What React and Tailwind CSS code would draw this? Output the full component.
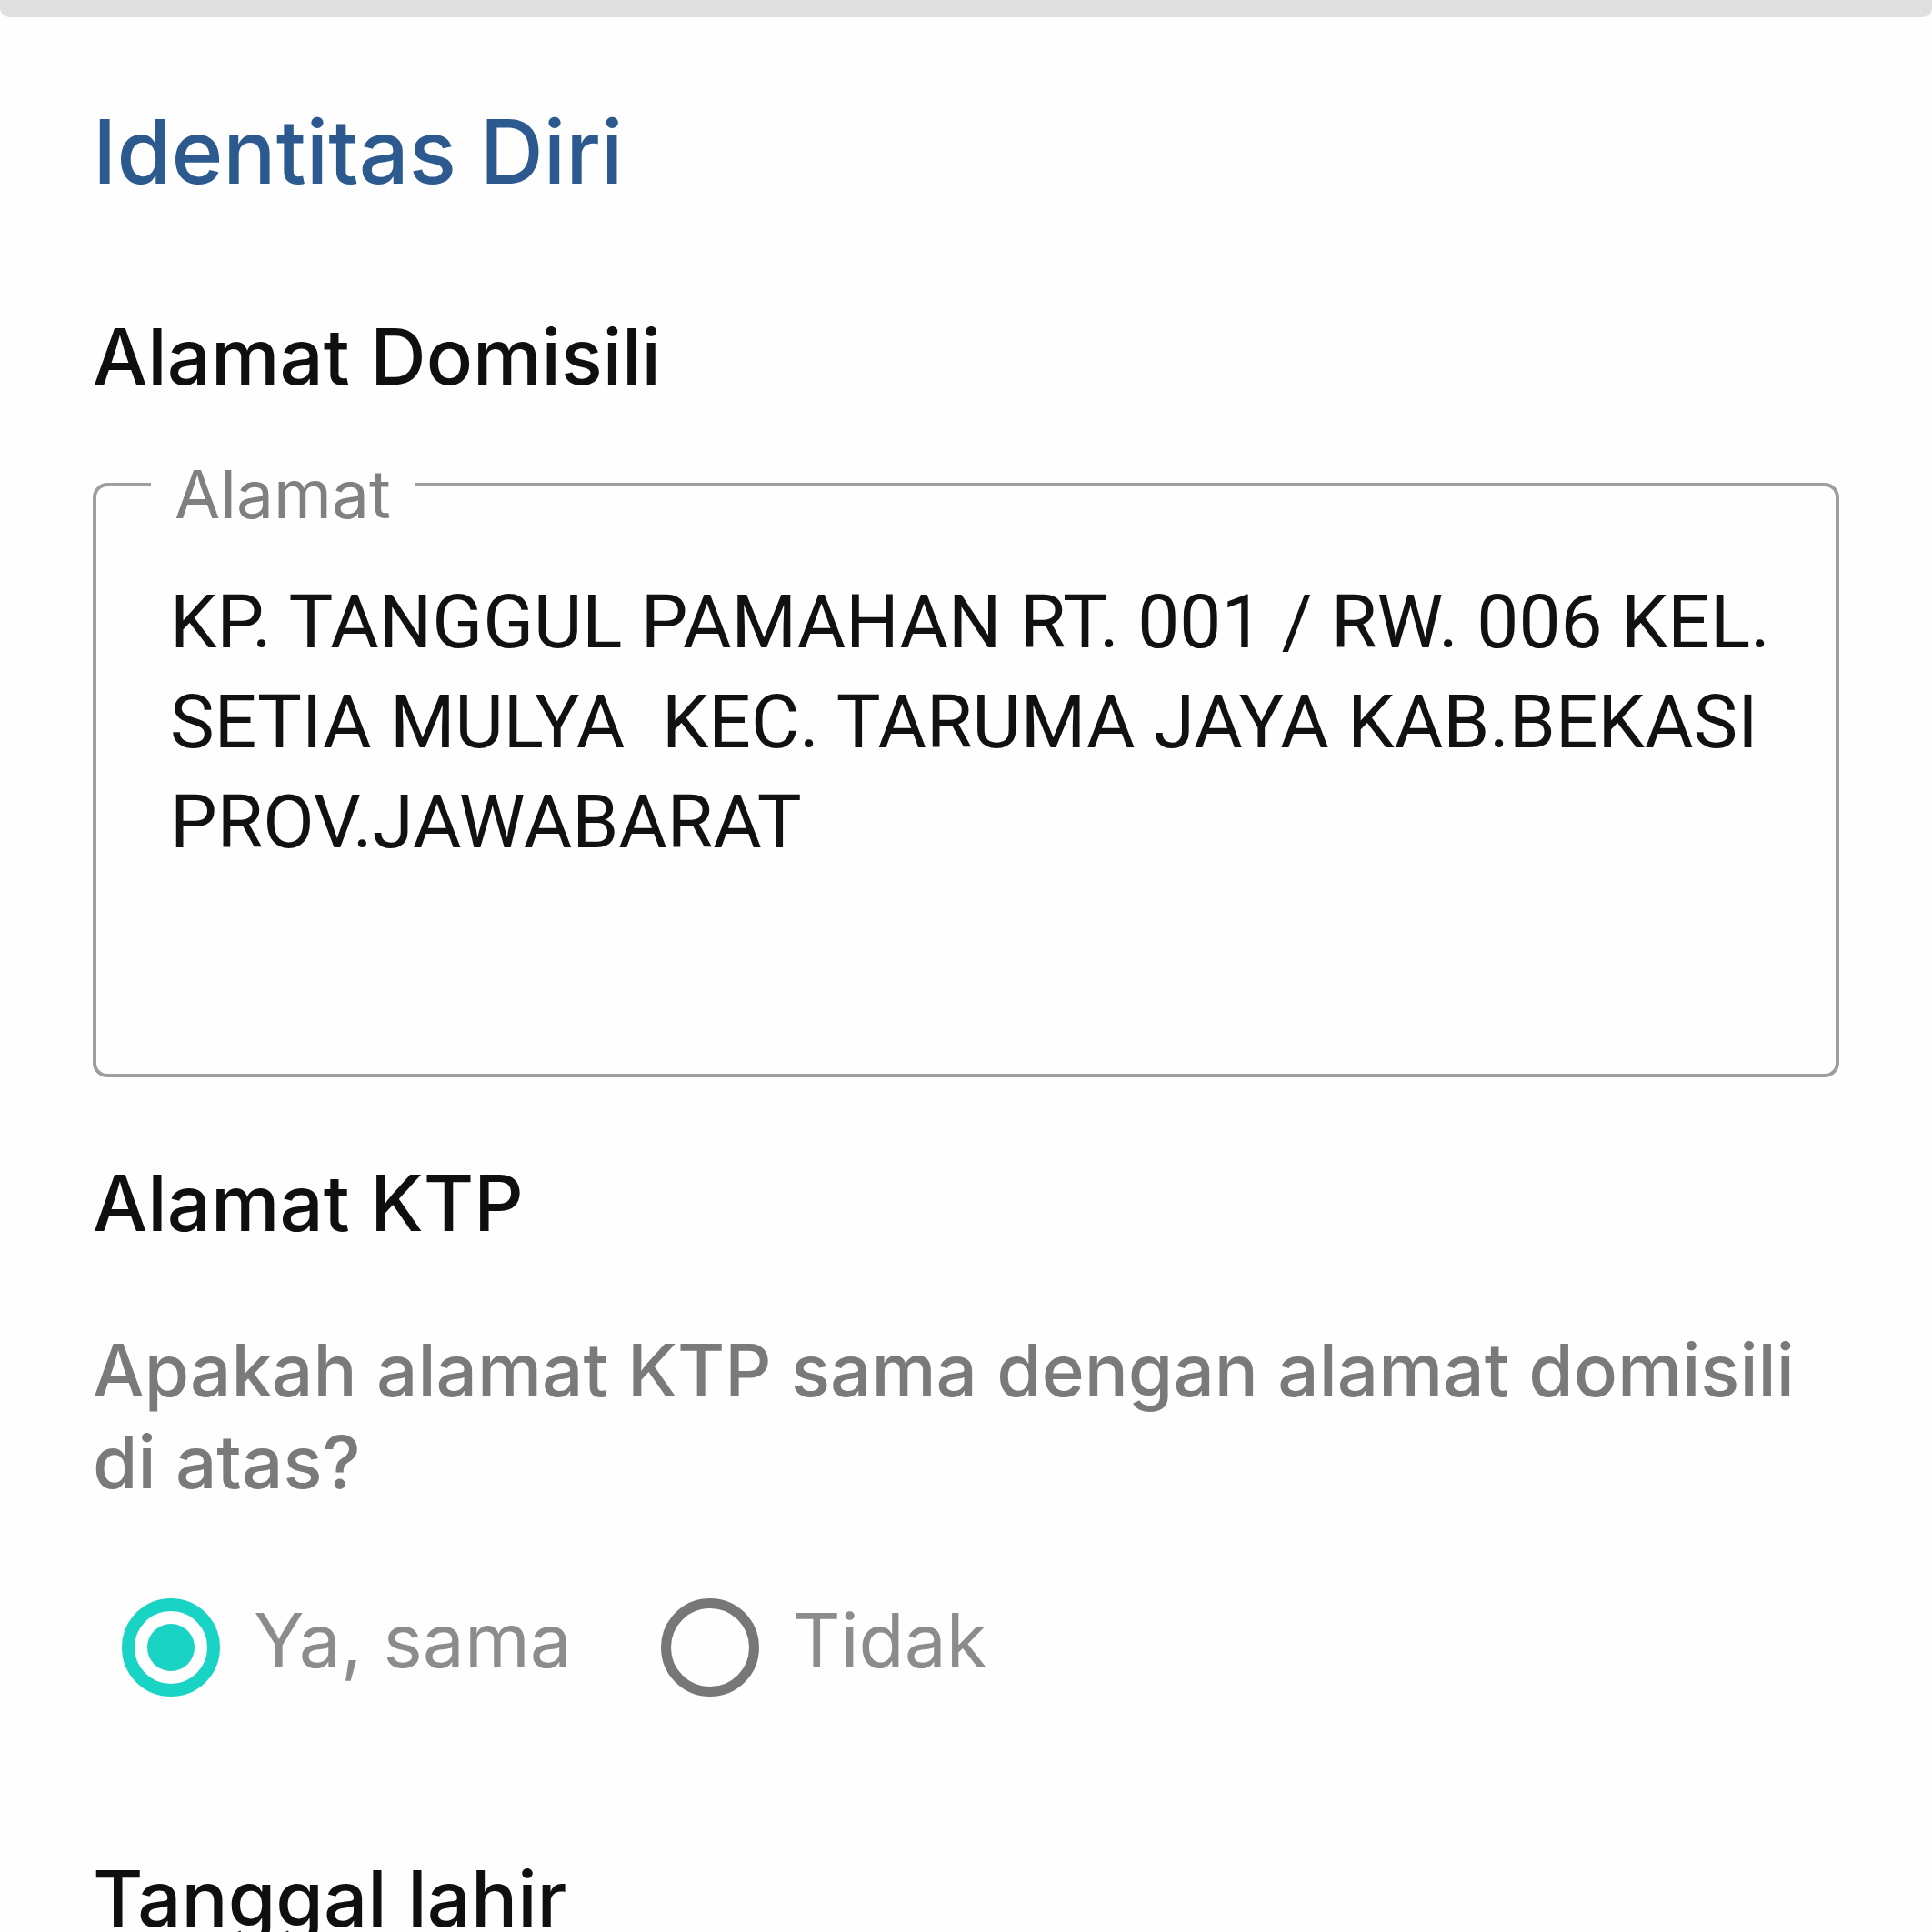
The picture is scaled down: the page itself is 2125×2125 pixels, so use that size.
import { useState } from 'react';

const alamatLines = [
  'KP. TANGGUL PAMAHAN RT. 001 / RW. 006 KEL.',
  'SETIA MULYA  KEC. TARUMA JAYA KAB.BEKASI',
  'PROV.JAWABARAT',
];

const Radio = ({ checked, label, onClick }) => {
  return (
    <button type="button" onClick={onClick} className="flex items-center gap-[37px] focus:outline-none">
      {checked ? (
        <span className="flex h-[108px] w-[108px] items-center justify-center rounded-full border-[14px] border-[#19d3c5]">
          <span className="h-[52px] w-[52px] rounded-full bg-[#19d3c5]" />
        </span>
      ) : (
        <span className="h-[108px] w-[108px] rounded-full border-[11px] border-[#777777]" />
      )}
      <span className="pb-[14px] text-[82px] font-normal leading-[100px] text-[#8c8c8c]">{label}</span>
    </button>
  );
};

const App = () => {
  const [sama, setSama] = useState(true);

  return (
    <div className="min-h-screen bg-[#fefefe] font-['Inter',sans-serif]">
      {/* sheet handle bar */}
      <div className="h-[19px] w-full rounded-b-[10px] bg-[#e0e0e0]" />

      <div className="px-[102px]">
        <h1 className="mt-[88px] text-[97px] font-medium leading-[120px] text-[#2c5a8e]">Identitas Diri</h1>

        <h2 className="mt-[116px] text-[85px] font-medium leading-[100px] text-[#0f0f0f]">Alamat Domisili</h2>

        {/* outlined textarea */}
        <div className="relative mt-[88px] h-[654px] rounded-[16px] border-[4px] border-[#9e9e9e]">
          <span className="absolute -top-[41px] left-[60px] bg-[#fefefe] px-[26px] text-[73px] font-normal leading-[100px] text-[#808080]">
            Alamat
          </span>
          <div className="pl-[81px] pt-[94px] font-['Roboto',sans-serif] text-[82px] leading-[110px] text-[#111111]">
            {alamatLines.map((line) => (
              <div key={line} className="whitespace-pre">{line}</div>
            ))}
          </div>
        </div>

        <h2 className="mt-[89px] text-[85px] font-medium leading-[100px] text-[#0f0f0f]">Alamat KTP</h2>

        <p className="mt-[82px] text-[80px] font-medium leading-[101px] text-[#7a7a7a]">
          Apakah alamat KTP sama dengan alamat domisili
          <br />
          di atas?
        </p>

        <div className="mt-[97px] flex items-center gap-[98px] pl-[32px]">
          <Radio checked={sama} label="Ya, sama" onClick={() => setSama(true)} />
          <Radio checked={!sama} label="Tidak" onClick={() => setSama(false)} />
        </div>

        <h2 className="mt-[170px] text-[85px] font-medium leading-[100px] text-[#0f0f0f]">Tanggal lahir</h2>
      </div>
    </div>
  );
};

export default App;
